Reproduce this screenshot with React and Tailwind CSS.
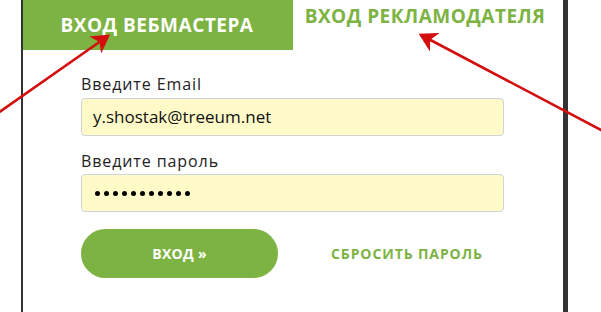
import React from "react";

const font = { fontFamily: '"Open Sans", "Liberation Sans", sans-serif' };

function Arrows() {
  return (
    <svg className="absolute inset-0 pointer-events-none" width="601" height="312" viewBox="0 0 601 312">
      <defs>
        <marker id="head" markerWidth="8" markerHeight="8" refX="6" refY="4" orient="auto" markerUnits="strokeWidth">
          <path d="M0,0 L7,4 L0,8 L2,4 Z" fill="#d30e0e" />
        </marker>
      </defs>
      <line x1="-2" y1="113" x2="108" y2="36" stroke="#d30e0e" strokeWidth="2.6" markerEnd="url(#head)" />
      <line x1="603" y1="131" x2="421" y2="35" stroke="#d30e0e" strokeWidth="2.6" markerEnd="url(#head)" />
    </svg>
  );
}

export default function App() {
  return (
    <div className="relative w-[601px] h-[312px] overflow-hidden bg-white" style={font}>
      <div className="ml-[21px] w-[547px] h-full border-l-2 border-r-[5px] border-[#333333]">
        <div className="flex">
          <div className="w-[270px] h-[50px] bg-[#7cb342] flex items-center justify-center pt-[1px]">
            <span className="text-white font-bold text-[19px] tracking-[0.5px] -ml-[2px]">ВХОД ВЕБМАСТЕРА</span>
          </div>
          <div className="flex-1 flex justify-center pt-[2px]">
            <span className="text-[#7cb342] font-bold text-[19px] tracking-[0.5px] -ml-[6px]">ВХОД РЕКЛАМОДАТЕЛЯ</span>
          </div>
        </div>
        <div className="pl-[58px] pr-[59px] pt-[24px]">
          <label className="block text-[16px] tracking-[0.9px] text-[#222] leading-[20px]">Введите Email</label>
          <div className="mt-[4px] h-[38px] bg-[#fffac8] border border-[#cfd4dc] rounded-[4px] flex items-center pl-[11px] text-[17px] text-[#111]">
            y.shostak@treeum.net
          </div>
          <label className="block mt-[15px] text-[16px] tracking-[0.9px] text-[#222] leading-[20px]">Введите пароль</label>
          <div className="mt-[3px] h-[38px] bg-[#fffac8] border border-[#cfd4dc] rounded-[4px] flex items-center pl-[13px] gap-[4px]">
            {Array.from({ length: 11 }).map((_, i) => (
              <span key={i} className="w-[5px] h-[5px] rounded-full bg-black" />
            ))}
          </div>
          <div className="mt-[17px] flex items-center">
            <button className="w-[197px] h-[49px] rounded-full bg-[#7cb342] text-white font-bold text-[14px] tracking-[0.3px]">
              ВХОД »
            </button>
            <span className="ml-[53px] text-[#7cb342] font-bold text-[14px] tracking-[0.9px]">СБРОСИТЬ ПАРОЛЬ</span>
          </div>
        </div>
      </div>
      <Arrows />
    </div>
  );
}
